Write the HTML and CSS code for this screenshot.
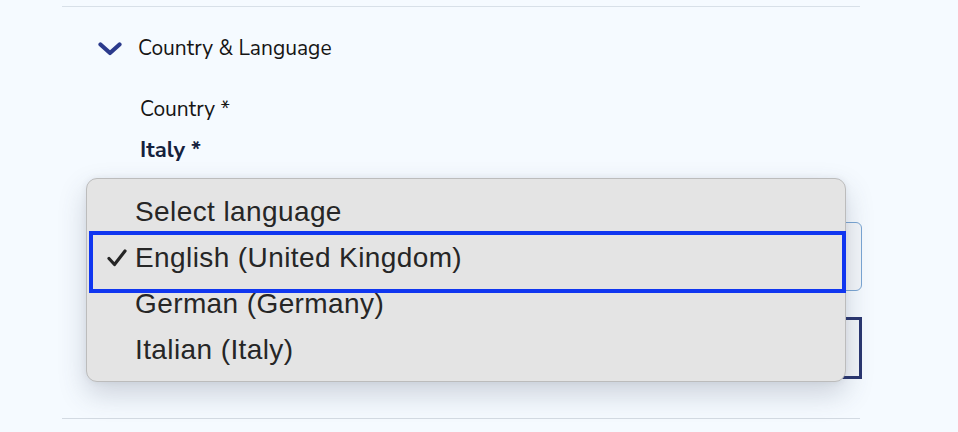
FILE: index.html
```html
<!DOCTYPE html>
<html>
<head>
<meta charset="utf-8">
<link rel="stylesheet" href="styles.css">
</head>
<body>
<div class="panel">
  <section class="item">
    <div class="item-head">
      <svg class="chev" width="24" height="14" viewBox="0 0 24 14"><path d="M2.5 2.5 L12 11 L21.5 2.5" fill="none" stroke="#2b3a8c" stroke-width="4.2" stroke-linecap="round" stroke-linejoin="round"/></svg>
      <span class="item-title">Country &amp; Language</span>
    </div>
    <div class="item-body">
      <div class="label">Country *</div>
      <div class="value">Italy *</div>
      <div class="field field-light"></div>
      <div class="field field-dark"></div>
    </div>
  </section>
  <div class="popup">
    <div class="opt">Select language</div>
    <div class="opt"><svg class="check" width="22" height="20" viewBox="0 0 22 20"><path d="M3 10.5 L8.5 16.5 L19 3" fill="none" stroke="#262626" stroke-width="3.2" stroke-linecap="round" stroke-linejoin="round"/></svg>English (United Kingdom)</div>
    <div class="opt">German (Germany)</div>
    <div class="opt">Italian (Italy)</div>
    <div class="ring"></div>
  </div>
</div>
</body>
</html>
```
FILE: styles.css
```css
html, body {
  margin: 0;
  padding: 0;
  background: #f5faff;
  width: 958px;
  height: 432px;
  overflow: hidden;
}
.panel {
  position: relative;
  margin-left: 62px;
  width: 798px;
  padding-top: 6px;
  font-family: "Nunito Sans", Lato, "Open Sans", sans-serif;
  color: #1b1b1b;
}
.item {
  border-top: 1px solid #d8e0e8;
  border-bottom: 1px solid #d3dae2;
  height: 413px;
  box-sizing: border-box;
}
.item-head {
  display: flex;
  align-items: flex-start;
  height: 80px;
  padding-left: 36px;
  padding-top: 27px;
  margin-top: 1px;
  box-sizing: border-box;
}
.chev {
  margin-top: 7px;
  margin-right: 16px;
}
.item-title {
  font-size: 21px;
  line-height: 26px;
  color: #151515;
}
.item-body {
  padding-left: 78px;
  margin-top: 8px;
}
.label {
  font-size: 21px;
  line-height: 26px;
  color: #151515;
}
.value {
  font-size: 22px;
  font-weight: 700;
  line-height: 26px;
  margin-top: 15px;
  color: #14213d;
}
.field {
  margin-left: -40px;
  width: 762px;
  box-sizing: border-box;
  background: #f3f6fa;
}
.field-light {
  margin-top: 59px;
  height: 69px;
  border: 1px solid #7aa6d4;
  border-radius: 6px;
}
.field-dark {
  margin-top: 26px;
  height: 62px;
  border: 3px solid #2a3670;
}
.popup {
  position: absolute;
  left: 24px;
  top: 178px;
  width: 760px;
  height: 204px;
  box-sizing: border-box;
  background: #e4e4e4;
  border: 1px solid #bcbcbc;
  border-radius: 11px;
  box-shadow: 0 12px 28px rgba(60, 70, 90, 0.22), 0 0 6px rgba(60, 70, 90, 0.08);
  padding-top: 10px;
  font-family: "Liberation Sans", Arial, sans-serif;
  font-size: 28px;
  letter-spacing: 0.4px;
  color: #262626;
}
.opt {
  position: relative;
  height: 46px;
  line-height: 46px;
  padding-left: 48px;
}
.check {
  position: absolute;
  left: 19px;
  top: 13px;
}
.ring {
  position: absolute;
  left: 2px;
  top: 52px;
  width: 757px;
  height: 62px;
  box-sizing: border-box;
  border: 4px solid #1036f0;
}
```
